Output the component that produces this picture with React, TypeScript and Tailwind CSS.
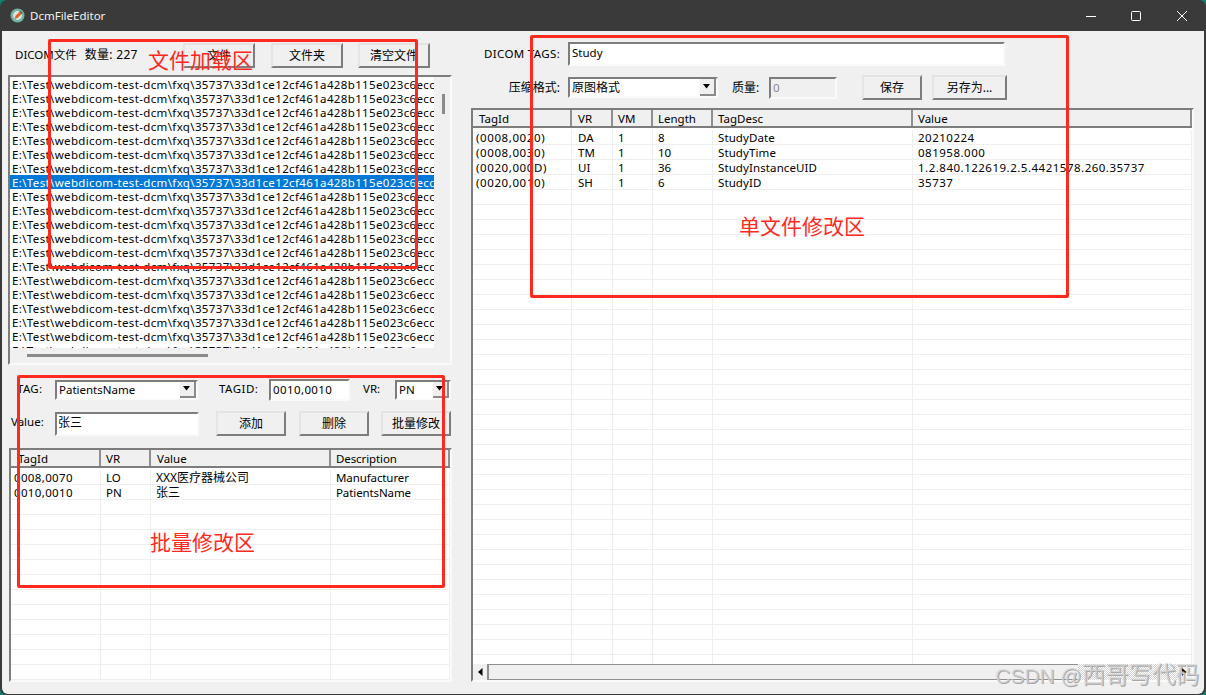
import React from "react";

const PATH = "E:\\Test\\webdicom-test-dcm\\fxq\\35737\\33d1ce12cf461a428b115e023c6ecc";
const raised = "border-2 border-t-[#e4e4e4] border-l-[#e4e4e4] border-r-[#7d7d7d] border-b-[#7d7d7d] bg-[#f0f0f0] flex items-center justify-center text-black text-[12px] shrink-0";
const sunken = "border-2 border-t-[#7d7d7d] border-l-[#7d7d7d] border-r-[#fafafa] border-b-[#fafafa] shrink-0";

function Btn({ w, ml, children }: { w: string; ml: string; children: React.ReactNode }) {
  return <div className={`${raised} ${w} ${ml} h-[25px]`}>{children}</div>;
}

function Combo({ className, text }: { className: string; text: string }) {
  return (
    <div className={`${sunken} ${className} bg-white flex items-center justify-between`}>
      <span className="pl-[2px] whitespace-nowrap">{text}</span>
      <span className="w-[16px] h-full bg-[#f0f0f0] border-r-2 border-b-2 border-[#8a8a8a] flex items-center justify-center shrink-0">
        <svg width="8" height="5" viewBox="0 0 8 5"><path d="M0 0h7L3.5 4.5z" fill="#000" /></svg>
      </span>
    </div>
  );
}

type Col = { w: string; head: string; hp: string; cp: string };

function Table({ cols, rows, count }: { cols: Col[]; rows: string[][]; count: number }) {
  const blank = Array.from({ length: count }, (_, i) => rows[i] ?? cols.map(() => ""));
  return (
    <>
      <div className="flex h-[18px] shrink-0 border-b-2 border-[#7d7d7d] bg-[#f0f0f0]">
        {cols.map((c) => (
          <div key={c.head} className={`${c.w} ${c.hp} border-r-2 border-[#8f8f8f] leading-[18px] whitespace-nowrap overflow-hidden`}>{c.head}</div>
        ))}
      </div>
      <div className="flex-1 min-h-0 overflow-hidden bg-white pt-[2px]">
        {blank.map((r, i) => (
          <div key={i} className="flex h-[15px] border-b border-[#efefef]">
            {r.map((v, j) => (
              <div key={j} className={`${cols[j].w} ${cols[j].cp} border-r border-[#efefef] leading-[15px] whitespace-nowrap`}>{v}</div>
            ))}
          </div>
        ))}
      </div>
    </>
  );
}

const leftCols: Col[] = [
  { w: "w-[90px]", head: "TagId", hp: "pl-[7px]", cp: "pl-[3px] tracking-[0.35px]" },
  { w: "w-[50px]", head: "VR", hp: "pl-[5px]", cp: "pl-[5px]" },
  { w: "w-[180px]", head: "Value", hp: "pl-[6px]", cp: "pl-[5px] text-[12px]" },
  { w: "flex-1", head: "Description", hp: "pl-[5px] tracking-[-0.1px]", cp: "pl-[5px] tracking-[-0.1px]" },
];
const rightCols: Col[] = [
  { w: "w-[99px]", head: "TagId", hp: "pl-[6px]", cp: "pl-[3px] tracking-[0.6px]" },
  { w: "w-[41px]", head: "VR", hp: "pl-[6px]", cp: "pl-[6px]" },
  { w: "w-[40px]", head: "VM", hp: "pl-[5px]", cp: "pl-[5px]" },
  { w: "w-[60px]", head: "Length", hp: "pl-[5px]", cp: "pl-[5px]" },
  { w: "w-[200px]", head: "TagDesc", hp: "pl-[5px]", cp: "pl-[5px] tracking-[0.1px]" },
  { w: "flex-1", head: "Value", hp: "pl-[5px]", cp: "pl-[5px] tracking-[0.5px]" },
];

export default function App() {
  return (
    <div className="relative w-[1206px] h-[695px] overflow-hidden bg-[#0f7f70] text-[11.5px] text-black font-['Noto_Sans','Noto_Sans_CJK_SC',sans-serif]">
      <div className="w-full h-full rounded-[7px] bg-[#3a3a3a] flex flex-col overflow-hidden pb-[1px] px-[2px]">
        <div className="h-[31px] shrink-0 flex items-center -mx-[2px] text-[#f2f2f2] text-[11.5px]">
          <svg className="ml-[10px]" width="15" height="15" viewBox="0 0 15 15">
            <circle cx="7.5" cy="7.5" r="7" fill="#6fb5a0" />
            <circle cx="7.5" cy="7.5" r="4.4" fill="#e6e6e0" />
            <path d="M4.5 11l1-3.2 4-4 2.2 2.2-4 4z" fill="#d9662a" />
            <path d="M9.5 3.8l2.2 2.2 1-1-2.2-2.2z" fill="#7a4a3a" />
          </svg>
          <span className="ml-[5px]">DcmFileEditor</span>
          <div className="ml-auto flex items-center">
            <svg width="12" height="12" viewBox="0 0 12 12" className="mr-[33px]"><path d="M1 6.5h10" stroke="#fff" /></svg>
            <svg width="12" height="12" viewBox="0 0 12 12" className="mr-[34px]"><rect x="1.5" y="1.5" width="9" height="9" rx="1" fill="none" stroke="#fff" /></svg>
            <svg width="12" height="12" viewBox="0 0 12 12" className="mr-[18px]"><path d="M1 1l10 10M11 1L1 11" stroke="#fff" /></svg>
          </div>
        </div>

        <div className="flex-1 min-h-0 flex bg-[#f0f0f0] rounded-b-[6px]">
          <div className="w-[444px] ml-[6px] shrink-0 flex flex-col">
            <div className="flex items-center h-[25px] mt-[12px] shrink-0">
              <div className="ml-[7px] w-[168px] -mt-[2px] whitespace-pre">
                <span>DICOM文件</span>
                <span className="ml-[8px] text-[12px] tracking-[0.3px]">数量: 227</span>
              </div>
              <Btn w="w-[72px]" ml="">文件</Btn>
              <Btn w="w-[72px]" ml="ml-[16px]">文件夹</Btn>
              <Btn w="w-[72px]" ml="ml-[15px]">清空文件</Btn>
            </div>
            <div className={`${sunken} border-r-[#dedede] border-b-[#dedede] mt-[7px] h-[290px]`}>
              <div className="flex h-[271px]">
                <div className="w-[424px] bg-white overflow-hidden">
                  {Array.from({ length: 20 }, (_, i) => (
                    <div key={i} className={`h-[14px] leading-[16px] tracking-[0.36px] whitespace-nowrap overflow-hidden pl-[2px] ${i === 7 ? "bg-[#0078d7] text-white" : ""}`}>{PATH}</div>
                  ))}
                </div>
                <div className="ml-[8px] mt-[17px] w-[3px] h-[20px] bg-[#8a8a8a]" />
              </div>
              <div className="ml-[17px] mt-[6px] w-[181px] h-[3px] bg-[#8a8a8a]" />
            </div>

            <div className="flex items-center h-[21px] mt-[14px] shrink-0">
              <div className="ml-[9px] w-[38px] -mt-[2px] tracking-[0.3px]">TAG:</div>
              <Combo className="w-[143px] h-[20px]" text="PatientsName" />
              <div className="ml-[21px] w-[50px] -mt-[2px] tracking-[0.5px]">TAGID:</div>
              <div className={`${sunken} w-[81px] h-[22px] bg-white pl-[2px] leading-[17px] tracking-[0.4px]`}>0010,0010</div>
              <div className="ml-[13px] w-[32px] -mt-[2px]">VR:</div>
              <Combo className="w-[56px] h-[20px]" text="PN" />
            </div>
            <div className="flex items-center h-[25px] mt-[11px] shrink-0">
              <div className="ml-[3px] w-[44px] -mt-[3px]">Value:</div>
              <div className={`${sunken} w-[144px] h-[24px] bg-white pl-[1px] leading-[18px] text-[12px]`}>张三</div>
              <Btn w="w-[70px]" ml="ml-[17px]">添加</Btn>
              <Btn w="w-[70px]" ml="ml-[13px]">删除</Btn>
              <Btn w="w-[70px]" ml="ml-[12px]">批量修改</Btn>
            </div>
            <div className={`${sunken} border-r-[#dedede] border-b-[#dedede] ml-[1px] mt-[12px] w-[443px] h-[234px] flex flex-col`}>
              <Table
                cols={leftCols}
                count={14}
                rows={[
                  ["0008,0070", "LO", "XXX医疗器械公司", "Manufacturer"],
                  ["0010,0010", "PN", "张三", "PatientsName"],
                ]}
              />
            </div>
          </div>

          <div className="ml-[19px] w-[723px] shrink-0 flex flex-col">
            <div className="flex items-center h-[24px] mt-[11px] shrink-0">
              <div className="ml-[13px] w-[84px] tracking-[0.35px] whitespace-nowrap">DICOM TAGS:</div>
              <div className={`${sunken} w-[437px] h-[24px] bg-white pl-[2px] leading-[17px]`}>Study</div>
            </div>
            <div className="flex items-center h-[25px] mt-[9px] shrink-0">
              <div className="w-[89px] text-right text-[12px]">压缩格式:</div>
              <Combo className="ml-[8px] w-[150px] h-[21px] text-[12px]" text="原图格式" />
              <div className="ml-[14px] w-[37px] text-[12px]">质量:</div>
              <div className={`${sunken} w-[68px] h-[22px] bg-[#f0f0f0] text-[#8a8a8a] pl-[2px] leading-[17px]`}>0</div>
              <Btn w="w-[60px]" ml="ml-[25px]">保存</Btn>
              <Btn w="w-[75px]" ml="ml-[10px]">另存为...</Btn>
            </div>
            <div className={`${sunken} border-r-[#dedede] border-b-[#dedede] mt-[8px] h-[574px] flex flex-col`}>
              <Table
                cols={rightCols}
                count={36}
                rows={[
                  ["(0008,0020)", "DA", "1", "8", "StudyDate", "20210224"],
                  ["(0008,0030)", "TM", "1", "10", "StudyTime", "081958.000"],
                  ["(0020,000D)", "UI", "1", "36", "StudyInstanceUID", "1.2.840.122619.2.5.4421578.260.35737"],
                  ["(0020,0010)", "SH", "1", "6", "StudyID", "35737"],
                ]}
              />
              <div className="h-[16px] shrink-0 flex bg-[#f0f0f0]">
                <div className="w-[16px] border-r-2 border-[#8f8f8f] flex items-center justify-center">
                  <svg width="5" height="8" viewBox="0 0 5 8"><path d="M4.5 0v8L0 4z" fill="#000" /></svg>
                </div>
                <div className="w-[589px] border-y border-[#8f8f8f]" />
                <div className="flex-1 bg-[repeating-conic-gradient(#d4d4d4_0_25%,#ffffff_0_50%)] bg-[length:2px_2px]" />
                <div className="w-[15px] flex items-center justify-center">
                  <svg width="5" height="8" viewBox="0 0 5 8"><path d="M0 0v8l4.5-4z" fill="#000" /></svg>
                </div>
              </div>
            </div>
          </div>
        </div>
      </div>

      <div className="absolute left-[48px] top-[39px] w-[370px] h-[230px] border-[3px] border-[#ff2a1f] rounded-[2px]" />
      <div className="absolute left-[17px] top-[375px] w-[428px] h-[213px] border-[3px] border-[#ff2a1f] rounded-[2px]" />
      <div className="absolute left-[530px] top-[35px] w-[539px] h-[263px] border-[3px] border-[#ff2a1f] rounded-[2px]" />
      <div className="absolute left-[148px] top-[45px] text-[21px] leading-[30px] text-[#ff2a1f]">文件加载区</div>
      <div className="absolute left-[150px] top-[527px] text-[21px] leading-[30px] text-[#ff2a1f]">批量修改区</div>
      <div className="absolute left-[739px] top-[211px] text-[21px] leading-[30px] text-[#ff2a1f]">单文件修改区</div>
      <div className="absolute left-[995px] top-[660px] text-[21px] leading-[30px] whitespace-nowrap text-[#d6d6d6]/75 [text-shadow:1px_1px_0_#a8a8a8] font-['Liberation_Sans','Noto_Sans_CJK_SC',sans-serif]">
        CSDN @<span className="text-[23.5px]">西哥写代码</span>
      </div>
    </div>
  );
}
